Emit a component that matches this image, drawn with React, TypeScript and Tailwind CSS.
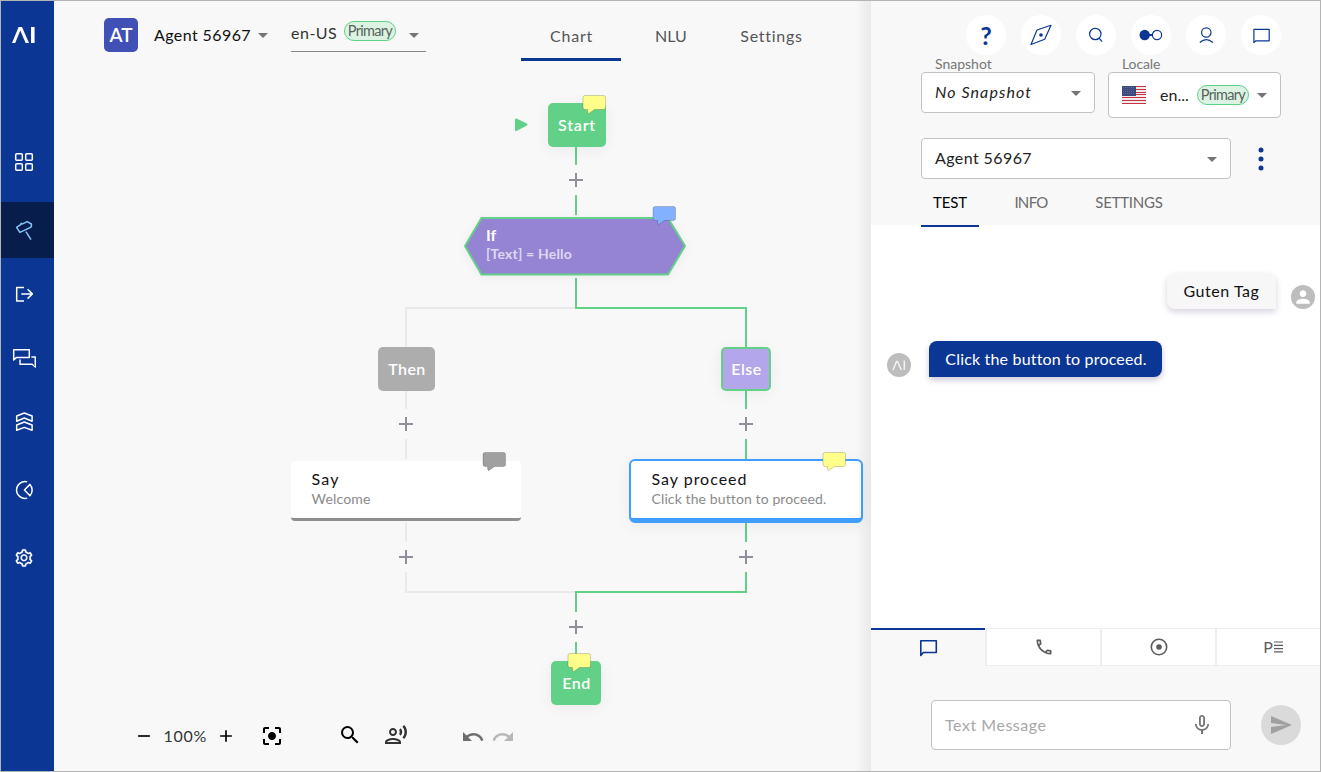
import type { ReactNode } from "react";
import {
  MdAdd,
  MdArrowDropDown,
  MdCenterFocusStrong,
  MdMicNone,
  MdOutlineLocalPhone,
  MdOutlineRecordVoiceOver,
  MdPerson,
  MdRedo,
  MdRemove,
  MdSearch,
  MdSend,
  MdUndo,
} from "react-icons/md";
import { AiOutlineSetting } from "react-icons/ai";

function Line({ size = 24, width = 1.5, children }: { size?: number; width?: number; children: ReactNode }) {
  return (
    <svg width={size} height={size} viewBox={`0 0 ${size} ${size}`} fill="none" stroke="currentColor" strokeWidth={width} strokeLinejoin="round">
      {children}
    </svg>
  );
}

function NavItem({ className = "", children }: { className?: string; children: ReactNode }) {
  return (
    <button className={`flex h-14 w-full shrink-0 items-center justify-center pr-[7px] ${className}`}>{children}</button>
  );
}

function Sidebar() {
  return (
    <nav className="flex w-[53px] shrink-0 flex-col bg-[#0b3694] text-white">
      <div className="flex h-[133px] pl-[10px] pt-[24px]">
        <svg width="26" height="20" viewBox="11 25 26 20">
          <path d="M12 43L18.6 27H22L29 43H25.6L20.3 30.5L15.2 43Z" fill="#fff" />
          <rect x="31" y="27" width="3.6" height="16" fill="#fff" />
        </svg>
      </div>
      <NavItem>
        <Line>
          <rect x="3.7" y="3.7" width="6.6" height="6.6" rx="1" />
          <rect x="13.7" y="3.7" width="6.6" height="6.6" rx="1" />
          <rect x="3.7" y="13.7" width="6.6" height="6.6" rx="1" />
          <rect x="13.7" y="13.7" width="6.6" height="6.6" rx="1" />
        </Line>
      </NavItem>
      <NavItem className="mt-3 bg-[#071d4b] text-[#86c4f7]">
        <Line>
          <path d="M4.6 9.3L8.6 6.6L9.2 5.3L10 6.1L15.2 3.6L19.4 6V8.6L17.6 9.9L7.9 14.4Z" />
          <path d="M13.9 13.6L19 21.6" />
        </Line>
      </NavItem>
      <NavItem className="mt-2">
        <Line>
          <path d="M12 5.4H4.7V18.9H12M9.3 11.9H20.3M15.6 7.2L20.3 11.9L15.6 16.6" />
        </Line>
      </NavItem>
      <NavItem className="mt-2">
        <Line>
          <path d="M1.7 13.9V3.7H17.3V11.6H4.3L1.7 13.9Z" />
          <path d="M8 13.4V18.3H20.2L23.3 21V11.1H19.4" />
        </Line>
      </NavItem>
      <NavItem className="mt-2">
        <Line>
          <path d="M4.7 6L12.3 3L20.1 6V11.3L12.3 8L4.7 11.3Z" />
          <path d="M4.7 15L12.3 12L20.1 15V20.3L12.3 17.4L4.7 20.3Z" />
        </Line>
      </NavItem>
      <NavItem className="mt-3">
        <Line>
          <path d="M15.2 3.9A8.4 8.4 0 1 0 15.2 20.1" />
          <path d="M18 6.4L12.4 12L18 17.8A8.6 8.6 0 0 0 18 6.4Z" />
        </Line>
      </NavItem>
      <NavItem className="mt-3">
        <AiOutlineSetting size={20} stroke="currentColor" strokeWidth={14} />
      </NavItem>
    </nav>
  );
}

function Primary({ className = "" }: { className?: string }) {
  return (
    <span className={`flex h-5 w-[52px] shrink-0 items-center justify-center rounded-full border border-[#5fd087] bg-[#dcf3e4] pt-px text-[14.5px] leading-none tracking-[-0.7px] text-[#56645b] ${className}`}>
      Primary
    </span>
  );
}

function Header() {
  return (
    <header className="flex h-[70px] shrink-0 pl-[50px]">
      <div className="mt-[17px] flex size-[34px] items-center justify-center rounded-[5px] bg-[#4150b5] text-[19px] font-semibold text-white">
        AT
      </div>
      <div className="ml-4 mt-[17px] flex h-[34px] w-[120px] items-center self-start">
        <span className="whitespace-nowrap text-[16px] tracking-[0.41px] text-[#111]">Agent 56967</span>
        <MdArrowDropDown size={24} className="shrink-0 text-[#757575]" />
      </div>
      <div className="ml-[17px] mt-[17px] flex h-[34px] w-[135px] items-center border-b border-[#858585]">
        <span className="mb-1 w-[46px] shrink-0 whitespace-nowrap text-[16px] tracking-[0.5px] text-[#333]">en-US</span>
        <Primary className="mb-[7px] ml-[7px]" />
        <MdArrowDropDown size={24} className="ml-[6px] shrink-0 text-[#757575]" />
      </div>
      <div className="ml-[95px] flex h-[60px] text-[16px] text-[#555]">
        <div className="flex w-[100px] items-center justify-center border-b-[3px] border-[#0b3694] pl-px pt-[12px] tracking-[0.77px]">Chart</div>
        <div className="flex w-[100px] items-center justify-center border-b-[3px] border-transparent pt-[12px]">NLU</div>
        <div className="flex w-[100px] items-center justify-center border-b-[3px] border-transparent pl-px pt-[12px] tracking-[0.74px]">Settings</div>
      </div>
    </header>
  );
}

function Bubble({ className, fill }: { className: string; fill: string }) {
  return (
    <svg width="28" height="24" viewBox="-3 -3.500 28 24" className={`absolute ${className}`}>
      <path
        d="M2 0H20.500Q22.500 0 22.500 2V12Q22.500 14 20.500 14H11.500L5.500 18.200Q4.500 18 4.500 14H2Q0 14 0 12V2Q0 0 2 0Z"
        fill={fill}
        stroke="#000"
        strokeOpacity="0.18"
        strokeWidth="1"
      />
    </svg>
  );
}

const pluses: [number, number][] = [
  [576, 180],
  [406, 424],
  [746, 424],
  [406, 557],
  [746, 557],
  [576, 627],
];

function Flow() {
  return (
    <div className="relative h-[629px] shrink-0">
      <svg width="817" height="629" viewBox="54 71 817 629" className="absolute inset-0" fill="none">
        <g stroke="#e9e9e9" strokeWidth="2">
          <path d="M576 308H406V347M406 391V409M406 439V459M406 522V542M406 572V592H576" />
        </g>
        <g stroke="#61d187" strokeWidth="2">
          <path d="M576 147V165M576 195V215M576 278V308H746V347M746 391V409M746 439V459M746 523V542M746 572V592H576V612M576 642V661" />
        </g>
        <g stroke="#8f8e9a" strokeWidth="2">
          {pluses.map(([x, y]) => (
            <path key={`${x}-${y}`} d={`M${x - 7} ${y}h14M${x} ${y - 7}v14`} />
          ))}
        </g>
        <path d="M516 119.500L526.500 124.500L516 130Z" fill="#61d187" stroke="#61d187" strokeWidth="2" strokeLinejoin="round" />
        <path
          d="M465 246L481.500 218H668L685 246L668 274.500H481.500Z"
          fill="#9583d3"
          stroke="#61d187"
          strokeWidth="2"
          strokeLinejoin="round"
          className="drop-shadow-[0_2px_5px_rgba(0,0,0,0.05)]"
        />
      </svg>

      <div className="absolute left-[494px] top-[32px] flex h-11 w-[58px] items-center justify-center rounded-[5px] bg-[#61d187] text-[16px] font-semibold tracking-[0.8px] text-white shadow-[0_3px_16px_rgba(0,0,0,0.06)]">
        Start
      </div>
      <div className="absolute left-[432px] top-[154px] flex flex-col font-bold">
        <span className="text-[16px] leading-[20px] text-white">If</span>
        <span className="text-[14px] leading-[18px] tracking-[0.19px] text-white/70">[Text] = Hello</span>
      </div>
      <div className="absolute left-[324px] top-[276px] flex h-11 w-[57px] items-center justify-center rounded-[5px] bg-[#adadad] pl-px text-[16px] font-semibold tracking-[0.4px] text-white">
        Then
      </div>
      <div className="absolute left-[667px] top-[276px] flex h-11 w-[50px] items-center justify-center rounded-[5px] border-2 border-[#61d187] bg-[#b3a6ea] pl-px text-[16px] font-semibold tracking-[0.5px] text-white shadow-[0_3px_16px_rgba(0,0,0,0.06)]">
        Else
      </div>
      <div className="absolute left-[237px] top-[390px] flex h-[60px] w-[230px] flex-col rounded-[4px] border-b-[3px] border-[#8f8f8f] bg-white pl-[20.500px] pt-[8px]">
        <span className="text-[16px] leading-[20px] tracking-[1.2px] text-[#111]">Say</span>
        <span className="pt-px text-[14px] leading-[18px] tracking-[0.17px] text-[#8a8a8a]">Welcome</span>
      </div>
      <div className="absolute left-[575px] top-[388px] flex h-16 w-[234px] flex-col rounded-[6px] border-2 border-b-[5px] border-[#3f9eff] bg-white pl-[20.500px] pt-[8px] shadow-[0_3px_16px_rgba(0,0,0,0.06)]">
        <span className="text-[16px] leading-[20px] tracking-[0.98px] text-[#111]">Say proceed</span>
        <span className="whitespace-nowrap pt-px text-[14px] leading-[18px] tracking-[0.11px] text-[#8a8a8a]">Click the button to proceed.</span>
      </div>
      <div className="absolute left-[497px] top-[590px] flex h-11 w-[50px] items-center justify-center rounded-[5px] bg-[#61d187] pl-px text-[16px] font-semibold tracking-[0.5px] text-white shadow-[0_3px_16px_rgba(0,0,0,0.06)]">
        End
      </div>

      <Bubble className="left-[526px] top-[21px]" fill="#ffff8a" />
      <Bubble className="left-[596px] top-[132px]" fill="#82b1ff" />
      <Bubble className="left-[426px] top-[378px]" fill="#a0a0a0" />
      <Bubble className="left-[766px] top-[378px]" fill="#ffff8a" />
      <Bubble className="left-[511px] top-[579px]" fill="#ffff8a" />
    </div>
  );
}

function Toolbar() {
  return (
    <footer className="flex h-[71px] items-center pl-20 text-black">
      <MdRemove size={20} className="shrink-0" />
      <span className="ml-[9.500px] w-[52.500px] text-[16px] tracking-[0.7px] text-[#333]">100%</span>
      <MdAdd size={20} className="shrink-0" />
      <MdCenterFocusStrong size={24} className="ml-6 shrink-0" />
      <MdSearch size={24} className="mb-[2px] ml-[54px] shrink-0" />
      <MdOutlineRecordVoiceOver size={24} className="mb-[2px] ml-[22px] shrink-0 text-[#333]" />
      <MdUndo size={24} className="ml-[53px] mt-[2px] shrink-0 text-[#6e6e6e]" />
      <MdRedo size={24} className="ml-[6px] mt-[2px] shrink-0 text-[#b8b8b8]" />
    </footer>
  );
}

function Round({ children }: { children: ReactNode }) {
  return <button className="flex size-10 items-center justify-center rounded-full bg-white text-[#0b3694]">{children}</button>;
}

function Flag() {
  return (
    <svg width="24" height="18" viewBox="0 0 24 18" className="shrink-0" shapeRendering="crispEdges">
      <rect width="24" height="18" fill="#f4e9ec" />
      {[0, 3, 6, 8, 11, 14, 17].map((y) => (
        <rect key={y} y={y} width="24" height="1" fill="#c4353f" />
      ))}
      <rect width="14" height="10" fill="#3b4a7d" />
      {[1, 3, 5, 7].map((y) => (
        <path key={y} d={`M1 ${y + 0.5}H13`} stroke="#5c6a96" strokeDasharray="1 1" />
      ))}
    </svg>
  );
}

function PanelHeader() {
  return (
    <div className="flex h-[224px] shrink-0 flex-col bg-[#f8f8f8] pl-[50px]">
      <div className="ml-[45px] mt-[14px] flex gap-[15px]">
        <Round>
          <span className="text-[25px] font-bold leading-none">?</span>
        </Round>
        <Round>
          <Line width={1.2}>
            <path d="M2 21.500L8 7L22 2.300L15.700 16.300Z" />
            <circle cx="12" cy="12" r="1.800" fill="currentColor" stroke="none" />
          </Line>
        </Round>
        <Round>
          <Line width={1.2}>
            <circle cx="11.300" cy="11" r="5.700" />
            <path d="M15 15.200L18.200 18.700" />
          </Line>
        </Round>
        <Round>
          <Line width={1.2}>
            <circle cx="5.700" cy="12" r="5.200" fill="currentColor" stroke="none" />
            <path d="M9 12H14" strokeWidth="2" />
            <circle cx="18" cy="12" r="4.600" />
          </Line>
        </Round>
        <Round>
          <Line width={1.2}>
            <circle cx="12.300" cy="9.500" r="4.700" />
            <path d="M5.800 19.500Q12.300 13.600 18.800 19.500" />
          </Line>
        </Round>
        <Round>
          <Line width={1.2}>
            <path d="M4.900 19.500V6.300H20.200V17.800H7Z" />
          </Line>
        </Round>
      </div>
      <div className="flex gap-[13px]">
        <div className="flex w-[174px] flex-col">
          <span className="h-[17px] pl-[14px] text-[14px] leading-[18px] text-[#777]">Snapshot</span>
          <div className="flex h-[41px] items-center justify-between rounded-[4px] border border-[#c2c2c2] bg-white pl-[13px] pr-[6px]">
            <span className="mb-px text-[16px] italic tracking-[1.1px] text-[#222]">No Snapshot</span>
            <MdArrowDropDown size={24} className="text-[#757575]" />
          </div>
        </div>
        <div className="flex w-[173px] flex-col">
          <span className="h-[17px] pl-[14px] text-[14px] leading-[18px] tracking-[-0.1px] text-[#777]">Locale</span>
          <div className="flex h-[46px] items-center rounded-[4px] border border-[#c2c2c2] bg-white pl-[13px]">
            <Flag />
            <span className="ml-[14px] w-[37px] text-[16px] text-[#222]">en...</span>
            <Primary />
            <MdArrowDropDown size={24} className="ml-px shrink-0 text-[#757575]" />
          </div>
        </div>
      </div>
      <div className="mt-5 flex items-center">
        <div className="flex h-[41px] w-[310px] items-center justify-between rounded-[4px] border border-[#c2c2c2] bg-white pl-[13px] pr-[6px]">
          <span className="mb-px text-[16px] tracking-[0.41px] text-[#222]">Agent 56967</span>
          <MdArrowDropDown size={24} className="text-[#757575]" />
        </div>
        <svg width="6" height="24" className="ml-[26.500px]" fill="#0b3694">
          <circle cx="3" cy="3" r="2.500" />
          <circle cx="3" cy="12" r="2.500" />
          <circle cx="3" cy="21" r="2.500" />
        </svg>
      </div>
      <div className="relative flex h-12 shrink-0 text-[15px] text-[#6b6b6b]">
        <div className="flex w-[58px] items-center justify-center border-b-2 border-[#0b3694] tracking-[-0.1px] text-black">TEST</div>
        <div className="flex w-[104px] items-center justify-center border-b-2 border-transparent tracking-[-0.7px]">INFO</div>
        <div className="flex w-[92px] items-center justify-center border-b-2 border-transparent tracking-[-0.25px]">SETTINGS</div>
      </div>
    </div>
  );
}

function Conversation() {
  return (
    <div className="flex min-h-0 flex-1 flex-col bg-white">
      <div className="mt-12 flex items-end justify-end pr-[5px]">
        <div className="flex h-9 w-[109px] items-center justify-center rounded-[8px] rounded-br-none bg-[#f7f7f7] text-[16px] tracking-[0.55px] text-[#111] shadow-[0_3px_6px_rgba(60,30,100,0.2)]">
          Guten Tag
        </div>
        <span className="ml-[15px] flex size-6 items-center justify-center rounded-full bg-[#bdbdbd] text-white">
          <MdPerson size={20} />
        </span>
      </div>
      <div className="mt-8 flex items-end pl-4">
        <span className="flex size-6 items-center justify-center rounded-full bg-[#bdbdbd]">
          <svg width="14" height="12" viewBox="0 0 14 12" fill="none" stroke="#f2f2f2" strokeWidth="1.500">
            <path d="M1 11L4.500 2.500H5.500L9.300 11M12.300 1.500V11" />
          </svg>
        </span>
        <div className="ml-[18px] flex h-9 w-[233px] items-center justify-center whitespace-nowrap rounded-[8px] rounded-bl-none bg-[#0b3694] pl-px text-[16px] tracking-[0.18px] text-white shadow-[0_3px_6px_rgba(60,30,100,0.25)]">
          Click the button to proceed.
        </div>
      </div>
    </div>
  );
}

function Composer() {
  return (
    <div className="flex shrink-0 flex-col bg-[#f8f8f8]">
      <div className="flex h-[38px] overflow-hidden text-[#5c5c5c]">
        <div className="flex w-[114px] shrink-0 items-center justify-center border-t-2 border-[#0b3694] pb-px text-[#0b3694]">
          <Line width={1.6}>
            <path d="M4.800 19.500V4.700H20.300V16.500H7.300Z" />
          </Line>
        </div>
        <div className="flex w-[115px] shrink-0 items-center justify-center border-y border-l-2 border-[#eee] bg-white">
          <MdOutlineLocalPhone size={20} />
        </div>
        <div className="flex w-[115px] shrink-0 items-center justify-center border-y border-l-2 border-[#eee] bg-white">
          <Line width={1.6}>
            <circle cx="12" cy="12" r="7.700" />
            <circle cx="12" cy="12" r="2.800" fill="currentColor" stroke="none" />
          </Line>
        </div>
        <div className="flex w-[115px] shrink-0 items-center justify-center gap-px border-y border-l-2 border-[#eee] bg-white">
          <span className="text-[16px] leading-none">P</span>
          <svg width="10" height="12" viewBox="0 0 10 12" stroke="currentColor" strokeWidth="1.200">
            <path d="M0 1H9M0 4.300H9M0 7.600H9M0 10.900H9" />
          </svg>
        </div>
      </div>
      <div className="flex h-[105px] items-start pl-[60px] pt-[34px]">
        <div className="flex h-[50px] w-[300px] items-center justify-between rounded-[4px] border border-[#c2c2c2] bg-white pl-[13px] pr-[16px]">
          <span className="text-[16px] tracking-[0.53px] text-[#a8a8a8]">Text Message</span>
          <MdMicNone size={24} className="text-[#757575]" />
        </div>
        <span className="ml-[30px] mt-[5px] flex size-10 items-center justify-center rounded-full bg-[#dadada] text-[#a0a0a0]">
          <MdSend size={24} />
        </span>
      </div>
    </div>
  );
}

export default function App() {
  return (
    <div className="flex h-[772px] w-[1321px] overflow-hidden border border-[#b4b4b4] bg-[#f8f8f8] font-['Lato',sans-serif] leading-normal">
      <Sidebar />
      <main className="relative flex w-[817px] shrink-0 flex-col">
        <Header />
        <Flow />
        <Toolbar />
        <div className="absolute inset-y-0 right-0 w-[16px] bg-linear-to-r from-transparent to-black/[0.06]" />
      </main>
      <aside className="flex w-[449px] shrink-0 flex-col">
        <PanelHeader />
        <Conversation />
        <Composer />
      </aside>
    </div>
  );
}
